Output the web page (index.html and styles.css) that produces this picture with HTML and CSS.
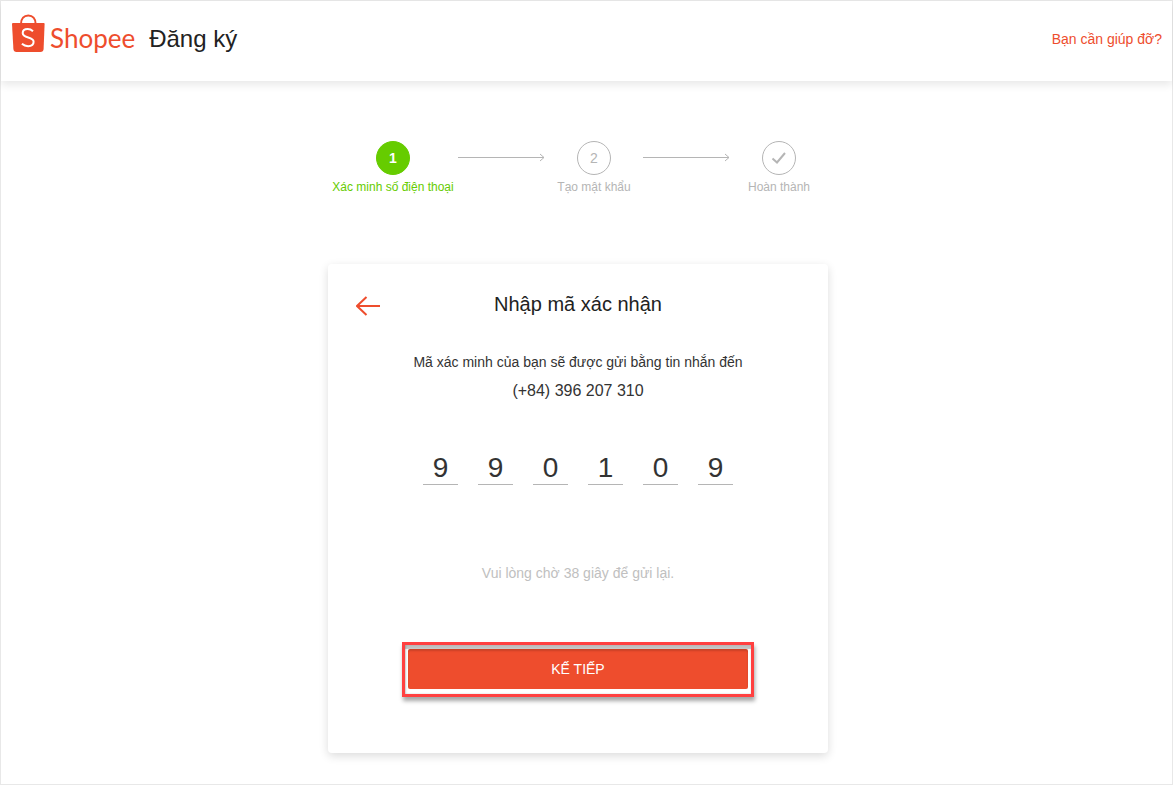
FILE: index.html
```html
<!doctype html>
<html lang="vi">
<head>
<meta charset="utf-8">
<meta name="viewport" content="width=device-width, initial-scale=1">
<title>Đăng ký | Shopee</title>
<link rel="stylesheet" href="styles.css">
</head>
<body>
<div class="page">
	<header class="header">
		<a class="logo" href="#">
			<svg class="logo-bag" width="34" height="38" viewBox="0 0 34 38" aria-hidden="true">
				<path d="M10 10C10 4.500 13 1.500 17.300 1.500S24.600 4.500 24.600 10" fill="none" stroke="#ee4d2d" stroke-width="2"/>
				<path d="M2 9h31q.6 0 .6 1l-1 25q-.2 3-3.200 3H5.600q-3 0-3.200-3L1 10q0-1 1-1z" fill="#ee4d2d"/>
				<path d="M22 17.200c-1.600-1.500-3.300-2.200-5.300-2.200-3 0-5 1.600-5 4 0 5.800 10.900 3.200 10.900 8.800 0 2.700-2.300 4.400-5.500 4.400-2.400 0-4.400-.8-6.200-2.400" fill="none" stroke="#fff" stroke-width="2"/>
			</svg>
			<span class="logo-name">Shopee</span>
		</a>
		<h1 class="header-title">Đăng ký</h1>
		<a class="help" href="#">Bạn cần giúp đỡ?</a>
	</header>

	<main class="main">
		<ol class="steps">
			<li class="step step-active">
				<span class="step-icon">1</span>
				<span class="step-label">Xác minh số điện thoại</span>
			</li>
			<li class="step-arrow" aria-hidden="true">
				<svg width="87" height="9" viewBox="0 0 87 9"><path d="M0 4.500h86M82 1l4 3.500-4 3.500"/></svg>
			</li>
			<li class="step">
				<span class="step-icon">2</span>
				<span class="step-label">Tạo mật khẩu</span>
			</li>
			<li class="step-arrow" aria-hidden="true">
				<svg width="87" height="9" viewBox="0 0 87 9"><path d="M0 4.500h86M82 1l4 3.500-4 3.500"/></svg>
			</li>
			<li class="step">
				<span class="step-icon">
					<svg width="16" height="14" viewBox="0 0 16 14" aria-hidden="true"><path d="M1.500 7.500l4.500 4 8-9.500" fill="none" stroke="#b5b5b5" stroke-width="2"/></svg>
				</span>
				<span class="step-label">Hoàn thành</span>
			</li>
		</ol>

		<form class="card">
			<div class="card-head">
				<button class="back" type="button" aria-label="Quay lại">
					<svg width="24" height="20" viewBox="0 0 24 20"><path d="M24 10H1M10.500 1L1 10l9.500 9" fill="none" stroke="#ee4d2d" stroke-width="2"/></svg>
				</button>
				<h2 class="card-title">Nhập mã xác nhận</h2>
			</div>
			<p class="message">Mã xác minh của bạn sẽ được gửi bằng tin nhắn đến</p>
			<p class="phone">(+84) 396 207 310</p>
			<div class="code">
				<input type="text" inputmode="numeric" maxlength="1" value="9" aria-label="Số thứ 1">
				<input type="text" inputmode="numeric" maxlength="1" value="9" aria-label="Số thứ 2">
				<input type="text" inputmode="numeric" maxlength="1" value="0" aria-label="Số thứ 3">
				<input type="text" inputmode="numeric" maxlength="1" value="1" aria-label="Số thứ 4">
				<input type="text" inputmode="numeric" maxlength="1" value="0" aria-label="Số thứ 5">
				<input type="text" inputmode="numeric" maxlength="1" value="9" aria-label="Số thứ 6">
			</div>
			<p class="resend">Vui lòng chờ 38 giây để gửi lại.</p>
			<div class="highlight">
				<button class="next" type="submit">KẾ TIẾP</button>
			</div>
		</form>
	</main>
</div>
</body>
</html>
```
FILE: styles.css
```css
* {
    box-sizing: border-box;
}
body {
    margin: 0;
    background: #fff;
    color: #222;
    font: 14px/20px "Liberation Sans", Arial, sans-serif;
}
h1, h2, p, ol {
    margin: 0;
    padding: 0;
    font-weight: normal;
}
a {
    color: #ee4d2d;
    text-decoration: none;
}
button, input {
    font-family: inherit;
}
svg {
    display: block;
}
.page {
    min-height: 100vh;
    border: 1px solid #e8e8e8;
}

/* header */
.header {
    display: flex;
    align-items: center;
    height: 80px;
    padding: 0 10px 4px;
    box-shadow: 0 4px 8px rgba(0, 0, 0, .09);
}
.logo {
    display: flex;
    align-items: center;
}
.logo-bag {
    margin-bottom: 12px;
}
.logo-name {
    margin-bottom: 2px;
    margin-left: 5px;
    font: 26px/32px Lato, sans-serif;
}
.header-title {
    margin-left: 14px;
    font-size: 24px;
    line-height: 32px;
}
.help {
    margin-left: auto;
}

.main {
    display: flex;
    flex-direction: column;
    align-items: center;
    padding: 60px 17px 31px 0;
}

/* progress */
.steps {
    display: flex;
    width: 100%;
    max-width: 500px;
    list-style: none;
    color: #b5b5b5;
}
.step {
    display: flex;
    flex: 1 1 98px;
    flex-direction: column;
    align-items: center;
    font-size: 12px;
    line-height: 16px;
    white-space: nowrap;
}
.step-icon {
    display: flex;
    align-items: center;
    justify-content: center;
    width: 34px;
    height: 34px;
    margin-bottom: 4px;
    border: 1px solid #b5b5b5;
    border-radius: 50%;
    font-size: 14px;
}
.step-active {
    flex-basis: 130px;
    color: #6c0;
}
.step-active .step-icon {
    border-color: #6c0;
    background: #6c0;
    color: #fff;
    font-weight: bold;
}
.step-arrow {
    flex: none;
    padding-top: 12px;
}
.step-arrow path {
    fill: none;
    stroke: #b5b5b5;
}

/* verification card */
.card {
    display: flex;
    flex-direction: column;
    align-items: center;
    width: 100%;
    max-width: 500px;
    margin-top: 69px;
    padding: 28px 28px 56px;
    border-radius: 4px;
    box-shadow: 0 3px 10px rgba(0, 0, 0, .14);
}
.card-head {
    display: grid;
    grid-template-columns: 24px 1fr 24px;
    align-items: center;
    width: 100%;
}
.back {
    padding: 4px 0 0;
    border: 0;
    background: none;
    cursor: pointer;
}
.card-title {
    font-size: 20px;
    line-height: 24px;
    text-align: center;
}
.message {
    margin-top: 36px;
    color: #333;
}
.phone {
    margin-top: 9px;
    color: #333;
    font-size: 16px;
}
.code {
    display: flex;
    gap: 20px;
    margin-top: 49px;
}
.code input {
    width: 35px;
    height: 35px;
    padding: 2px 0 0;
    border: 0;
    border-bottom: 1px solid #b5b5b5;
    border-radius: 0;
    outline: 0;
    background: none;
    color: #333;
    font-size: 28px;
    text-align: center;
}
.resend {
    margin-top: 78px;
    color: #c0c0c0;
}
.highlight {
    width: 100%;
    max-width: 352px;
    margin-top: 59px;
    padding: 4px 3px 5px;
    border: 3px solid #ff4040;
    box-shadow: 1px 4px 4px rgba(0, 0, 0, .35), inset 0 4px 1px rgba(0, 0, 0, .24), inset 1px 0 2px rgba(0, 0, 0, .2);
}
.next {
    display: block;
    width: 100%;
    height: 40px;
    padding: 0;
    border: 0;
    border-radius: 2px;
    background: #ee4d2d;
    box-shadow: inset 0 2px 2px rgba(0, 0, 0, .15);
    color: #fff;
    font-size: 14px;
    cursor: pointer;
}
```
